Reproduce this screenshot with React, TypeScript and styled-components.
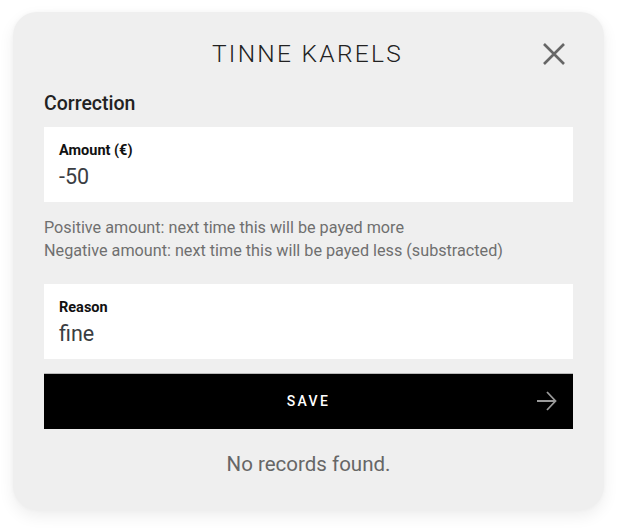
import React from "react";
import styled, { createGlobalStyle } from "styled-components";

const Global = createGlobalStyle`
  html, body { margin: 0; padding: 0; background: #ffffff; }
  body { font-family: Roboto, "Liberation Sans", sans-serif; }
  * { box-sizing: border-box; }
`;

const Page = styled.div`
  width: 621px;
  height: 529px;
  padding: 12px 17px 0 13px;
`;

const Card = styled.div`
  width: 591px;
  height: 498px;
  background: #efefef;
  border-radius: 24px;
  box-shadow: 0 6px 16px rgba(0, 0, 0, 0.07), 0 0 4px rgba(0, 0, 0, 0.03);
  padding: 26px 31px 0 31px;
  display: flex;
  flex-direction: column;
`;

const Header = styled.div`
  position: relative;
  height: 32px;
  display: flex;
  align-items: center;
  justify-content: center;
`;

const Title = styled.h1`
  margin: 0;
  font-family: Roboto, "Liberation Sans", sans-serif;
  font-weight: 300;
  font-size: 24.5px;
  line-height: 32px;
  letter-spacing: 2.3px;
  color: #222;
  padding-right: 2px;
`;

const CloseButton = styled.button`
  position: absolute;
  right: 6px;
  top: 3px;
  width: 26px;
  height: 26px;
  padding: 0;
  border: none;
  background: transparent;
  display: flex;
  align-items: center;
  justify-content: center;
`;

const SectionTitle = styled.h2`
  margin: 22px 0 0 0;
  font-size: 19.5px;
  font-weight: 500;
  color: #222;
  line-height: 24px;
`;

const Field = styled.div<{ $mt: number }>`
  margin-top: ${(p) => p.$mt}px;
  background: #ffffff;
  height: 75px;
  padding: 16px 15px 0 15px;
  display: flex;
  flex-direction: column;
`;

const FieldLabel = styled.label`
  font-size: 14.5px;
  font-weight: 700;
  color: #111;
  line-height: 16px;
`;

const FieldValue = styled.div`
  margin-top: 6px;
  font-size: 21.5px;
  color: #3a3d42;
  line-height: 24px;
`;

const Help = styled.div`
  margin-top: 14px;
  font-size: 16.2px;
  color: #6f6f6f;
  line-height: 23px;
`;

const SaveButton = styled.button`
  margin-top: 14px;
  height: 56px;
  background: #000;
  border: none;
  border-top: 1px solid #bbb;
  position: relative;
  display: flex;
  align-items: center;
  justify-content: center;
  color: #fff;
  font-family: Roboto, "Liberation Sans", sans-serif;
  font-size: 14px;
  font-weight: 500;
  letter-spacing: 2.4px;
  padding: 0 0 2px 0;
`;

const ArrowIcon = styled.svg`
  position: absolute;
  right: 16px;
  top: 16px;
`;

const Empty = styled.div`
  margin-top: 23px;
  text-align: center;
  font-size: 20.5px;
  color: #666;
  line-height: 24px;
`;

export default function App() {
  return (
    <>
      <Global />
      <Page>
        <Card>
          <Header>
            <Title>TINNE KARELS</Title>
            <CloseButton aria-label="Close">
              <svg width="24" height="24" viewBox="0 0 24 24">
                <path d="M2 2 L22 22 M22 2 L2 22" stroke="#666" strokeWidth="2.6" strokeLinecap="butt" />
              </svg>
            </CloseButton>
          </Header>
          <SectionTitle>Correction</SectionTitle>
          <Field $mt={11}>
            <FieldLabel>Amount (€)</FieldLabel>
            <FieldValue>-50</FieldValue>
          </Field>
          <Help>
            Positive amount: next time this will be payed more
            <br />
            Negative amount: next time this will be payed less (substracted)
          </Help>
          <Field $mt={22}>
            <FieldLabel>Reason</FieldLabel>
            <FieldValue>fine</FieldValue>
          </Field>
          <SaveButton>
            SAVE
            <ArrowIcon width="21" height="22" viewBox="0 0 21 22">
              <path d="M1 11 H19 M11 2 L19.5 11 L11 20" stroke="#9a9a9a" strokeWidth="1.8" fill="none" />
            </ArrowIcon>
          </SaveButton>
          <Empty>No records found.</Empty>
        </Card>
      </Page>
    </>
  );
}
